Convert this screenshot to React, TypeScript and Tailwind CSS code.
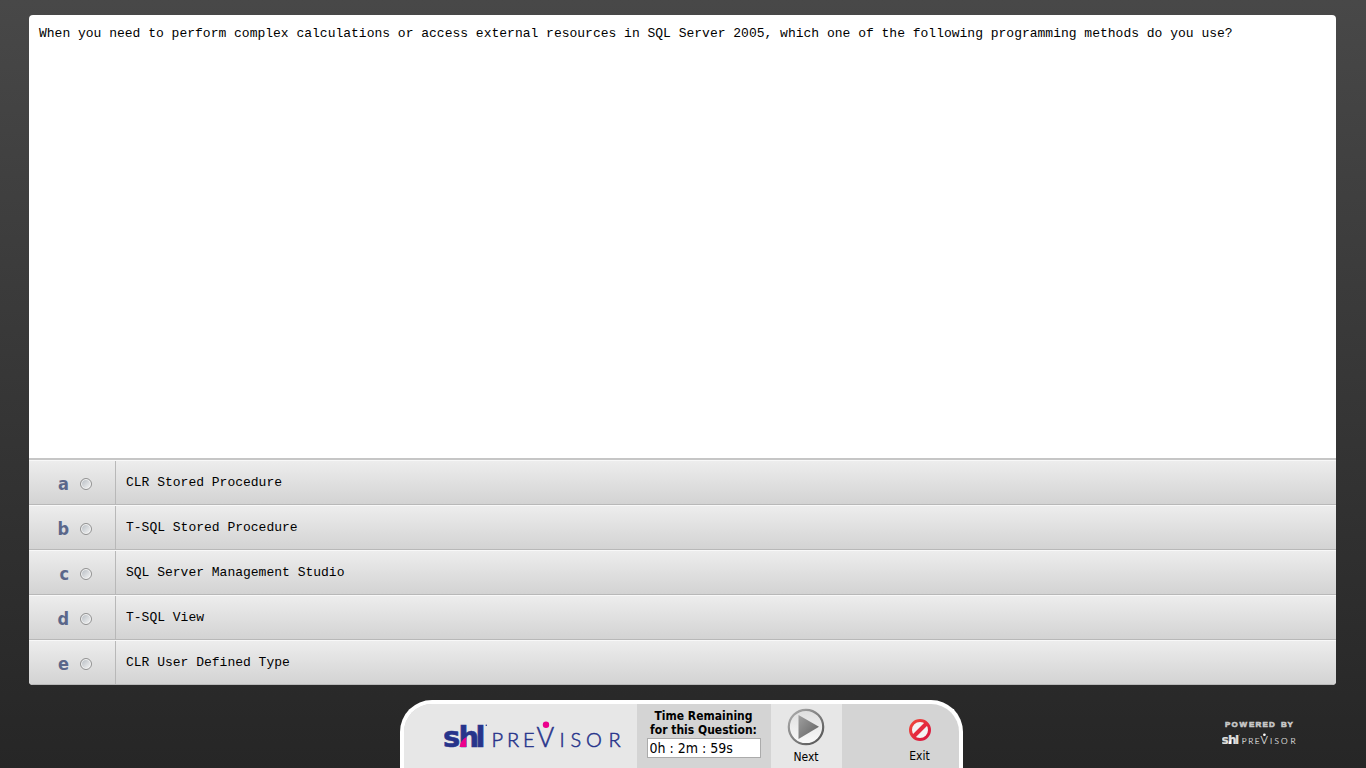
import React, { useState } from "react";

const question =
  "When you need to perform complex calculations or access external resources in SQL Server 2005, which one of the following programming methods do you use?";

const answers = [
  { id: "a", text: "CLR Stored Procedure" },
  { id: "b", text: "T-SQL Stored Procedure" },
  { id: "c", text: "SQL Server Management Studio" },
  { id: "d", text: "T-SQL View" },
  { id: "e", text: "CLR User Defined Type" },
];

const mono = "font-['Liberation_Mono',monospace] text-[13px]";
const ui = "font-['DejaVu_Sans_Condensed','DejaVu_Sans',sans-serif]";

type LogoProps = { ink: string; accent: string; className: string };

function Logo({ ink, accent, className }: LogoProps) {
  return (
    <svg viewBox="0 -6 178 40" className={className} role="img" aria-label="SHL PreVisor">
      <g fill={ink} stroke={ink} strokeWidth="0.6" fontFamily="DejaVu Sans, sans-serif" fontWeight="700" fontSize="29">
        <text x="-1 14.5 31.5" y="25.5">shl</text>
      </g>
      <path d="M15.5 26 C16.5 21 18.5 18 22.4 16 V26 Z" fill={accent} />
      <circle cx="42.3" cy="4.2" r="0.8" fill={ink} />
      <text y="25.5" fill={ink} stroke={ink} strokeWidth="0.5" fontFamily="Lato, sans-serif" fontWeight="300" fontSize="20">
        <tspan x="47.5 63 79">PRE</tspan>
        <tspan x="92.5" fontSize="27">V</tspan>
        <tspan x="115.5 126.5 142 164.5">ISOR</tspan>
      </text>
      <circle cx="102" cy="3.8" r="3.2" fill={accent} />
    </svg>
  );
}

function NextIcon() {
  return (
    <svg viewBox="0 0 38 38" className="size-[38px]" aria-hidden="true">
      <defs>
        <linearGradient id="ring" x1="0" y1="0" x2="1" y2="1">
          <stop offset="0" stopColor="#b0b0b0" />
          <stop offset="1" stopColor="#505050" />
        </linearGradient>
        <linearGradient id="face" x1="0" y1="0" x2="0" y2="1">
          <stop offset="0" stopColor="#dedede" />
          <stop offset="1" stopColor="#fafafa" />
        </linearGradient>
        <linearGradient id="arrow" x1="0" y1="0" x2="1" y2="1">
          <stop offset="0" stopColor="#a0a0a0" />
          <stop offset="1" stopColor="#606060" />
        </linearGradient>
      </defs>
      <circle cx="19" cy="19" r="17.2" fill="url(#face)" stroke="url(#ring)" strokeWidth="2.2" />
      <path d="M11.5 7 L32 18.8 L11.5 31 Z" fill="url(#arrow)" />
    </svg>
  );
}

function ExitIcon() {
  return (
    <svg viewBox="0 0 24 24" className="size-6" aria-hidden="true">
      <defs>
        <linearGradient id="stop" x1="0" y1="0" x2="1" y2="1">
          <stop offset="0" stopColor="#f04a3c" />
          <stop offset="1" stopColor="#d81440" />
        </linearGradient>
      </defs>
      <circle cx="12" cy="12" r="9.5" fill="#f4f4f4" stroke="url(#stop)" strokeWidth="3" />
      <path d="M6 18 L18 6" stroke="#e62a3e" strokeWidth="4" />
    </svg>
  );
}

export default function App() {
  const [choice, setChoice] = useState("");

  return (
    <div className="flex min-h-screen flex-col bg-linear-to-b from-[#484848] to-[#262626] text-black">
      <main className="mr-[30px] ml-[29px] mt-[15px] flex flex-1 flex-col overflow-hidden rounded-[4px] bg-white">
        <section className="flex-1 border-b-2 border-[#c6c6c6] px-[10px] py-[9px]">
          <p className={`${mono} leading-5`}>{question}</p>
        </section>
        <fieldset aria-label="Answers">
          {answers.map((a) => (
            <label
              key={a.id}
              className="flex h-[45px] border-t border-b border-t-[#f8f8f8] border-b-[#b8b8b8] bg-linear-to-b from-[#ededed] to-[#d3d3d3]"
            >
              <span className="flex w-[87px] items-center justify-end gap-[11px] border-r border-[#b8b8b8] pt-[2px] pr-[23px]">
                <span className={`${ui} text-[18px] leading-5 font-bold text-[#5a678a]`}>{a.id}</span>
                <input
                  type="radio"
                  name="answer"
                  value={a.id}
                  checked={choice === a.id}
                  onChange={() => setChoice(a.id)}
                  className="size-3 appearance-none rounded-full border border-[#929292] bg-linear-to-br from-[#b4bac0] to-[#f8f8f8] ring-1 ring-[#f4f4f4] ring-inset checked:from-[#3c5a88]"
                />
              </span>
              <span className={`${mono} flex items-center pl-[10px] leading-5`}>{a.text}</span>
            </label>
          ))}
        </fieldset>
      </main>

      <footer className="mt-[15px] mr-1 grid grid-cols-[1fr_auto_1fr]">
        <div className={`${ui} col-start-2 flex h-[68px] overflow-hidden rounded-t-[32px] border-4 border-b-0 border-white bg-[#d4d4d4] text-[12px]`}>
          <div className="flex w-[233px] justify-end bg-[#e7e7e7] pt-[11px] pr-[15px]">
            <Logo ink="#27348b" accent="#ec008c" className="h-10 w-[178px]" />
          </div>
          <div className="flex w-[134px] flex-col items-center pt-[5px]">
            <label htmlFor="time" className="text-center leading-[14px] font-bold">
              Time Remaining
              <br />
              for this Question:
            </label>
            <input
              id="time"
              readOnly
              value="0h : 2m : 59s"
              className="mt-px h-5 w-[114px] border border-[#ababab] bg-white px-[2px] text-[14px]"
            />
          </div>
          <button type="button" className="flex w-[71px] flex-col items-center bg-[#e7e7e7] pt-1 leading-4">
            <NextIcon />
            <span className="mt-[3px]">Next</span>
          </button>
          <div className="flex w-[117px] justify-end pr-[27px]">
            <button type="button" className="flex flex-col items-center pt-[14px] leading-4">
              <ExitIcon />
              <span className="mt-[6px]">Exit</span>
            </button>
          </div>
        </div>
        <div className="flex flex-col items-end pt-[17px] pr-[66px]">
          <div className="flex flex-col items-start">
            <svg viewBox="0 0 74 12" className="h-3 w-[74px]" role="img" aria-label="Powered by">
              <text
                x="3 9.5 17.5 27 33.5 40.5 47 59 65.5"
                y="10"
                fill="#c8c8c8"
                stroke="#c8c8c8"
                strokeWidth="0.6"
                fontFamily="Liberation Sans, sans-serif"
                fontWeight="700"
                fontSize="8"
              >
                POWEREDBY
              </text>
            </svg>
            <Logo ink="#dedede" accent="#ffffff" className="h-5 w-[74px]" />
          </div>
        </div>
      </footer>
    </div>
  );
}
